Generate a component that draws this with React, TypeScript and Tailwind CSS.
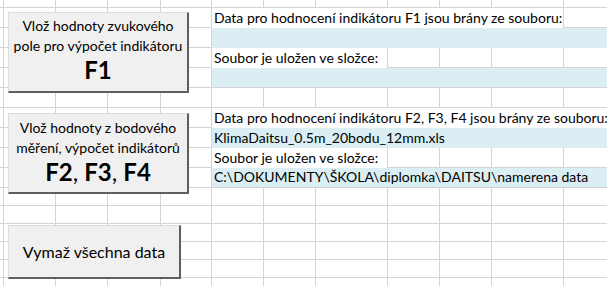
import React from "react";

const COLS = [4, 52, 52, 53, 51, 52, 52, 72, 52, 52, 72, 44];
const ROWS = [8, 20, 20, 20, 20, 20, 20, 20, 20, 20, 18, 18, 18, 18, 18, 18];

type RowSpec = {
  text?: string;
  span?: number; // columns covered by the text/fill starting at column 5
  blue?: boolean;
  bottom?: boolean; // gridline under the text/fill
};

const ROW_SPECS: Record<number, RowSpec> = {
  1: { text: "Data pro hodnocení indikátoru F1 jsou brány ze souboru:", span: 6 },
  2: { blue: true, span: 7 },
  3: { text: "Soubor je uložen ve složce:", span: 3 },
  4: { blue: true, span: 7, bottom: true },
  6: { text: "Data pro hodnocení indikátoru F2, F3, F4 jsou brány ze souboru:", span: 7 },
  7: { blue: true, span: 7, text: "KlimaDaitsu_0.5m_20bodu_12mm.xls" },
  8: { text: "Soubor je uložen ve složce:", span: 3 },
  9: { blue: true, span: 7, bottom: true, text: "C:\\DOKUMENTY\\ŠKOLA\\diplomka\\DAITSU\\namerena data" },
};

function Sheet() {
  const cells: React.ReactNode[] = [];
  ROWS.forEach((_, r) => {
    const spec = ROW_SPECS[r];
    let c = 0;
    while (c < COLS.length) {
      if (spec && c === 5) {
        const span = spec.span ?? 1;
        const last = c + span - 1;
        const showRight = last < COLS.length - 1 && !spec.blue;
        cells.push(
          <div
            key={`${r}-${c}`}
            style={{ gridColumn: `${c + 1} / span ${span}`, gridRow: r + 1 }}
            className={`flex items-end whitespace-nowrap pl-[2px] pb-[1px] text-[14px] leading-[18px] text-black ${
              spec.blue ? "bg-[#daeef3]" : ""
            } ${showRight ? "border-r border-[#d4d4d4]" : ""} ${
              spec.bottom ? "border-b border-[#d4d4d4]" : ""
            }`}
          >
            {spec.text}
          </div>
        );
        c = last + 1;
        continue;
      }
      cells.push(
        <div
          key={`${r}-${c}`}
          style={{ gridColumn: c + 1, gridRow: r + 1 }}
          className="border-r border-b border-[#d4d4d4]"
        />
      );
      c++;
    }
  });

  return (
    <div
      className="grid"
      style={{
        gridTemplateColumns: COLS.map((w) => `${w}px`).join(" "),
        gridTemplateRows: ROWS.map((h) => `${h}px`).join(" "),
      }}
    >
      {cells}
    </div>
  );
}

function SheetButton({
  className,
  children,
}: {
  className: string;
  children: React.ReactNode;
}) {
  return (
    <div
      className={`absolute flex flex-col items-center whitespace-nowrap bg-[#f0f0f0] border-t border-l border-[#dcdcdc] border-r-2 border-b-2 border-r-[#5f5f5f] border-b-[#5f5f5f] text-black ${className}`}
    >
      {children}
    </div>
  );
}

export default function App() {
  return (
    <div
      className="relative h-[286px] w-[607px] overflow-hidden bg-white"
      style={{ fontFamily: "Lato, 'Open Sans', sans-serif" }}
    >
      <Sheet />

      <SheetButton className="left-[8px] top-[12px] h-[81px] w-[181px] pt-[3px]">
        <div className="text-[14px] leading-[20px]">Vlož hodnoty zvukového</div>
        <div className="text-[14px] leading-[20px]">pole pro výpočet indikátoru</div>
        <div className="mt-[1px] text-[24px] font-bold leading-[26px]">F1</div>
      </SheetButton>

      <SheetButton className="left-[8px] top-[113px] h-[81px] w-[181px] pt-[4px]">
        <div className="text-[14px] leading-[20px]">Vlož hodnoty z bodového</div>
        <div className="text-[14px] leading-[20px]">měření, výpočet indikátorů</div>
        <div className="mt-[1px] text-[24px] leading-[26px]">
          <span className="font-bold">F2</span>, <span className="font-bold">F3</span>,{" "}
          <span className="font-bold">F4</span>
        </div>
      </SheetButton>

      <SheetButton className="left-[8px] top-[225px] h-[54px] w-[173px] justify-center">
        <div className="text-[16px] leading-[20px]">Vymaž všechna data</div>
      </SheetButton>
    </div>
  );
}
